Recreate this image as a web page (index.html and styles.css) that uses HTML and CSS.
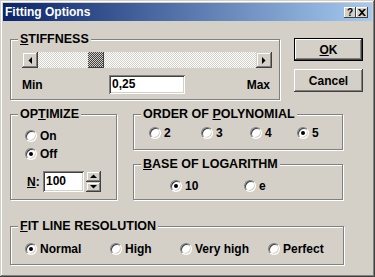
FILE: index.html
```html
<!DOCTYPE html>
<html lang="en">
<head>
    <meta charset="UTF-8">
    <meta name="viewport" content="width=device-width, initial-scale=1.0">
    <title>Fitting Options</title>
    <link rel="stylesheet" href="styles.css">
</head>
<body>
    <div class="window">
        <div class="titlebar">
            <span class="title">Fitting Options</span>
            <div class="caption-buttons">
                <span class="cap-btn">?</span>
                <span class="cap-btn">
                    <svg width="8" height="7" viewBox="0 0 8 7"><path d="M0 0h2l2 2 2-2h2L5 3.5 8 7H6L4 5 2 7H0l3-3.5z" fill="#000"/></svg>
                </span>
            </div>
        </div>

        <div class="content">
            <!-- Stiffness + dialog buttons -->
            <div class="top-row">
                <div class="group stiffness">
                    <div class="group-title"><u>S</u>TIFFNESS</div>
                    <div class="group-body">
                        <div class="scrollbar">
                            <span class="sb-btn">
                                <svg width="4" height="7" viewBox="0 0 4 7"><path d="M4 0v7L0.5 3.5z" fill="#000"/></svg>
                            </span>
                            <span class="sb-track"><span class="sb-thumb"></span></span>
                            <span class="sb-btn">
                                <svg width="4" height="7" viewBox="0 0 4 7"><path d="M0 0v7l3.5-3.5z" fill="#000"/></svg>
                            </span>
                        </div>
                        <div class="value-row">
                            <span>Min</span>
                            <span class="edit">0,25</span>
                            <span class="max">Max</span>
                        </div>
                    </div>
                </div>
                <div class="buttons">
                    <button class="btn default"><u>O</u>K</button>
                    <button class="btn">Cancel</button>
                </div>
            </div>

            <div class="middle-row">
                <!-- Optimize -->
                <div class="group optimize">
                    <div class="group-title">OP<u>T</u>IMIZE</div>
                    <div class="group-body">
                        <div class="opt-list">
                            <label class="opt"><span class="radio"></span>On</label>
                            <label class="opt"><span class="radio checked"></span>Off</label>
                        </div>
                        <div class="n-row">
                            <span class="n-label"><u>N</u>:</span>
                            <span class="edit n-edit">100</span>
                            <span class="spin">
                                <span class="spin-btn">
                                    <svg width="7" height="4" viewBox="0 0 7 4"><path d="M0 4h7L3.5 0.5z" fill="#000"/></svg>
                                </span>
                                <span class="spin-btn">
                                    <svg width="7" height="4" viewBox="0 0 7 4"><path d="M0 0h7L3.5 3.5z" fill="#000"/></svg>
                                </span>
                            </span>
                        </div>
                    </div>
                </div>

                <div class="right-col">
                    <!-- Order of polynomial -->
                    <div class="group order">
                        <div class="group-title">ORDER OF <u>P</u>OLYNOMIAL</div>
                        <div class="group-body opt-row order-row">
                            <label class="opt"><span class="radio"></span>2</label>
                            <label class="opt"><span class="radio"></span>3</label>
                            <label class="opt"><span class="radio"></span>4</label>
                            <label class="opt"><span class="radio checked"></span>5</label>
                        </div>
                    </div>

                    <!-- Base of logarithm -->
                    <div class="group base">
                        <div class="group-title"><u>B</u>ASE OF LOGARITHM</div>
                        <div class="group-body opt-row base-row">
                            <label class="opt"><span class="radio checked"></span>10</label>
                            <label class="opt"><span class="radio"></span>e</label>
                        </div>
                    </div>
                </div>
            </div>

            <!-- Fit line resolution -->
            <div class="group resolution">
                <div class="group-title"><u>F</u>IT LINE RESOLUTION</div>
                <div class="group-body opt-row resolution-row">
                    <label class="opt"><span class="radio checked"></span>Normal</label>
                    <label class="opt"><span class="radio"></span>High</label>
                    <label class="opt"><span class="radio"></span>Very high</label>
                    <label class="opt"><span class="radio"></span>Perfect</label>
                </div>
            </div>
        </div>
    </div>
</body>
</html>
```

FILE: styles.css
```css
body {
    margin: 0;
    background: #d4d0c8;
    font-family: "Liberation Sans", Arial, sans-serif;
    font-weight: bold;
    font-size: 12px;
    color: #000;
}

.window {
    width: 375px;
    height: 277px;
    box-sizing: border-box;
    padding: 3px;
    background: #d4d0c8;
    box-shadow: inset -1px -1px 0 #404040, inset 1px 1px 0 #d4d0c8,
                inset -2px -2px 0 #808080, inset 2px 2px 0 #fff;
}

.titlebar {
    height: 18px;
    display: flex;
    align-items: center;
    justify-content: space-between;
    padding: 0 4px 0 2px;
    background: linear-gradient(to right, #0a246a, #a6caf0);
    color: #fff;
    font-size: 12px;
}

.caption-buttons {
    display: flex;
    margin-top: 1px;
}

.cap-btn {
    width: 12px;
    height: 11px;
    display: flex;
    align-items: center;
    justify-content: center;
    background: #d4d0c8;
    color: #000;
    font-size: 10px;
    line-height: 11px;
    box-shadow: inset -1px -1px 0 #404040, inset 1px 1px 0 #fff;
}

.content {
    padding: 18px 0 0 7px;
}

/* etched group box */
.group {
    box-sizing: border-box;
    border: 1px solid #808080;
    box-shadow: inset 1px 1px 0 #fff, 1px 1px 0 #fff;
}

.group-title {
    width: fit-content;
    margin: -7px 0 0 7px;
    padding: 0 2px;
    line-height: 13px;
    font-size: 12.5px;
    background: #d4d0c8;
}

u {
    text-decoration-thickness: 1px;
    text-underline-offset: 1px;
}

.top-row {
    display: flex;
    align-items: flex-start;
    gap: 14px;
}

.stiffness {
    width: 270px;
    height: 61px;
}

.stiffness .group-body {
    padding: 0 7px 0 11px;
}

.scrollbar {
    display: flex;
    width: 250px;
    height: 16px;
    margin-top: 6px;
}

.sb-btn, .spin-btn {
    display: flex;
    align-items: center;
    justify-content: center;
    background: #d4d0c8;
    box-shadow: inset -1px -1px 0 #404040, inset 1px 1px 0 #d4d0c8,
                inset -2px -2px 0 #808080, inset 2px 2px 0 #fff;
}

.sb-btn {
    width: 16px;
    height: 16px;
}

.sb-track {
    flex: 1;
    display: flex;
    background: repeating-conic-gradient(#fff 0 25%, #d4d0c8 0 50%) 0 0 / 2px 2px;
}

.sb-thumb {
    width: 16px;
    height: 16px;
    margin-left: 50px;
    background: repeating-conic-gradient(#404040 0 25%, #d4d0c8 0 50%) 0 0 / 2px 2px;
    box-shadow: inset -1px -1px 0 #404040;
}

.value-row {
    display: grid;
    grid-template-columns: 87px 76px 1fr;
    align-items: center;
    margin-top: 7px;
}

.max {
    justify-self: end;
    padding-right: 2px;
}

.edit {
    box-sizing: border-box;
    height: 19px;
    padding: 0 3px;
    line-height: 19px;
    background: #fff;
    box-shadow: inset 1px 1px 0 #808080, inset -1px -1px 0 #fff,
                inset 2px 2px 0 #404040, inset -2px -2px 0 #d4d0c8;
}

.buttons {
    display: flex;
    flex-direction: column;
    gap: 8px;
    margin-top: -1px;
}

.btn {
    width: 69px;
    height: 23px;
    padding: 0;
    border: none;
    background: #d4d0c8;
    font: inherit;
    color: #000;
    box-shadow: inset -1px -1px 0 #404040, inset 1px 1px 0 #fff,
                inset -2px -2px 0 #808080, inset 2px 2px 0 #d4d0c8;
}

.btn.default {
    box-shadow: inset 0 0 0 1px #000, inset -2px -2px 0 #404040, inset 2px 2px 0 #fff,
                inset -3px -3px 0 #808080;
}

.middle-row {
    display: flex;
    align-items: flex-start;
    gap: 16px;
    margin-top: 14px;
}

.optimize {
    width: 107px;
    height: 86px;
}

.optimize .group-body {
    padding-left: 14px;
}

.opt-list {
    margin-top: 6px;
}

.opt {
    display: flex;
    align-items: center;
    gap: 3px;
    height: 18px;
    font-size: 12px;
}

.radio {
    flex: none;
    width: 12px;
    height: 12px;
    box-sizing: border-box;
    display: grid;
    place-items: center;
    border: 1px solid;
    border-color: #808080 #fff #fff #808080;
    border-radius: 50%;
    background: #fff;
    box-shadow: inset 1px 1px 0 #404040, inset -1px -1px 0 #d4d0c8;
}

.radio.checked::after {
    content: "";
    width: 4px;
    height: 4px;
    border-radius: 50%;
    background: #000;
}

.n-row {
    display: flex;
    align-items: center;
    height: 21px;
    margin-top: 8px;
}

.n-label {
    width: 16px;
    margin-left: 2px;
}

.n-edit {
    width: 41px;
    height: 21px;
    line-height: 21px;
}

.spin {
    display: flex;
    flex-direction: column;
    width: 15px;
    height: 21px;
    margin-left: 2px;
}

.spin-btn {
    flex: 1;
}

.right-col {
    display: flex;
    flex-direction: column;
    gap: 14px;
    width: 210px;
}

.order, .base {
    height: 36px;
}

.opt-row {
    display: grid;
}

.order-row {
    grid-template-columns: 52px 49px 47px auto;
    margin-top: 3px;
    padding-left: 15px;
}

.base-row {
    grid-template-columns: 74px auto;
    margin-top: 6px;
    padding-left: 36px;
}

.resolution {
    width: 334px;
    height: 39px;
    margin-top: 26px;
}

.resolution-row {
    grid-template-columns: 85px 70px 88px auto;
    margin-top: 7px;
    padding-left: 14px;
}
```
